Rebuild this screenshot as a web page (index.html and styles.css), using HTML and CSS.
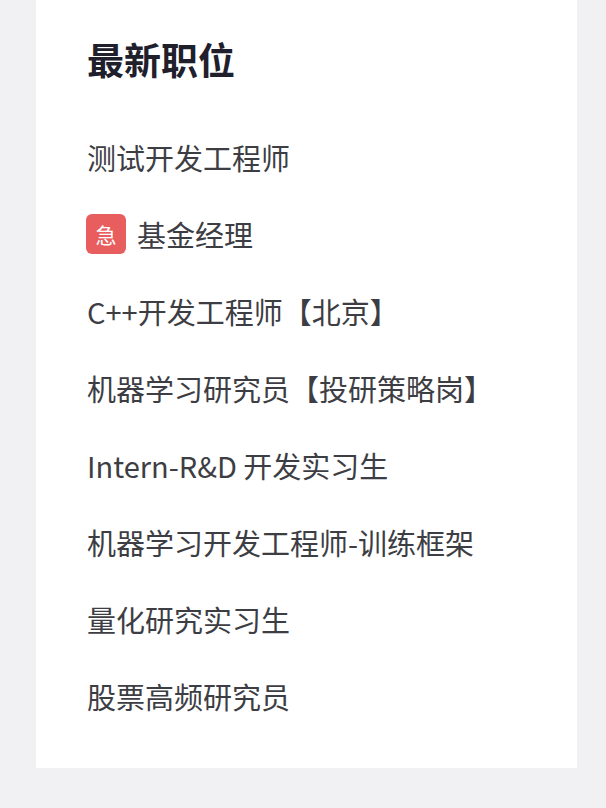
FILE: index.html
```html
<!DOCTYPE html>
<html lang="zh-CN">
<head>
<meta charset="utf-8">
<title>最新职位</title>
<link rel="stylesheet" href="styles.css">
</head>
<body>
<section class="card">
  <h2 class="title">最新职位</h2>
  <ul class="jobs">
    <li class="job">测试开发工程师</li>
    <li class="job"><span class="badge">急</span>基金经理</li>
    <li class="job">C++开发工程师【北京】</li>
    <li class="job">机器学习研究员【投研策略岗】</li>
    <li class="job">Intern-R&amp;D 开发实习生</li>
    <li class="job">机器学习开发工程师-训练框架</li>
    <li class="job">量化研究实习生</li>
    <li class="job">股票高频研究员</li>
  </ul>
</section>
</body>
</html>
```

FILE: styles.css
```css
html, body {
  margin: 0;
  padding: 0;
}
body {
  background: #f1f1f4;
  font-family: "Noto Sans CJK SC", "Noto Sans", sans-serif;
  width: 606px;
  height: 808px;
  overflow: hidden;
}
.card {
  margin-left: 36px;
  width: 541px;
  box-sizing: border-box;
  background: #ffffff;
  padding: 34px 0 34px 51px;
}
.title {
  margin: 0;
  font-size: 37px;
  line-height: 50px;
  font-weight: 700;
  color: #20202c;
}
.jobs {
  list-style: none;
  margin: 34px 0 0 0;
  padding: 0;
}
.job {
  height: 77px;
  display: flex;
  align-items: center;
  font-size: 29px;
  color: #3d3d44;
  white-space: nowrap;
}
.badge {
  width: 40px;
  height: 40px;
  border-radius: 6px;
  background: #e85d5d;
  color: #ffffff;
  font-size: 21px;
  display: flex;
  align-items: center;
  justify-content: center;
  margin-left: -1px;
  margin-right: 11px;
  flex: none;
}
```
